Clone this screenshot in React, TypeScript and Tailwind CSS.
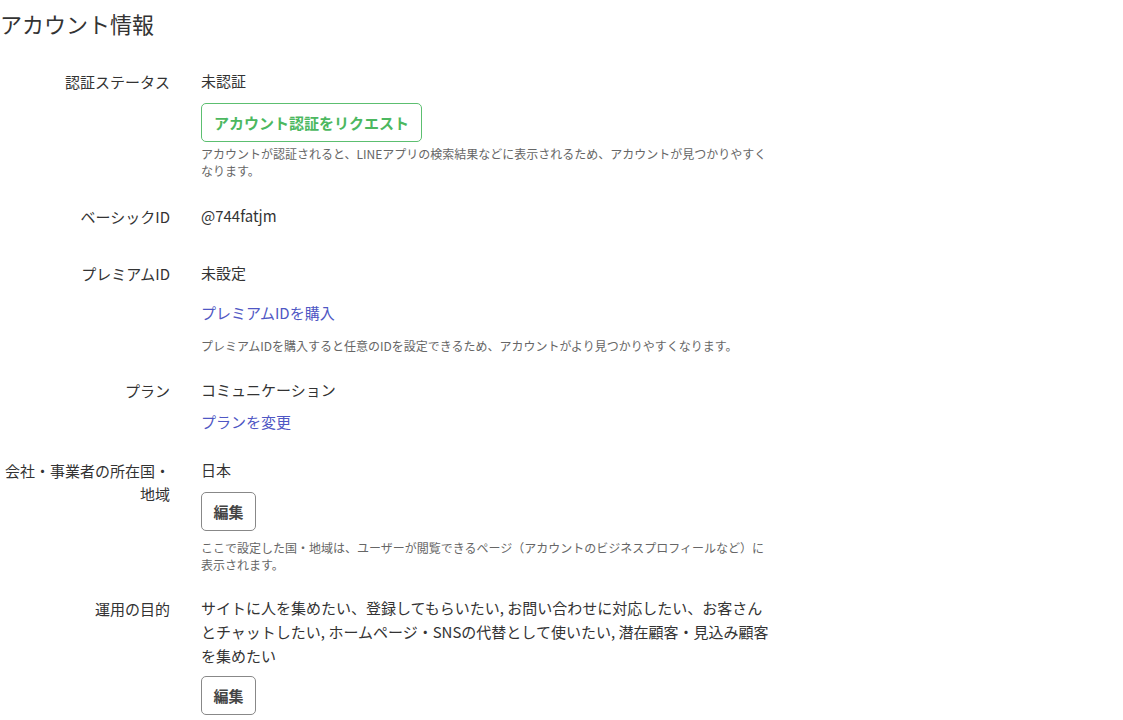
const font = {
  fontFamily: '"Noto Sans CJK JP", "Noto Sans", sans-serif',
};

function Row({
  label,
  className,
  children,
}: {
  label: React.ReactNode;
  className?: string;
  children: React.ReactNode;
}) {
  return (
    <div className={`grid grid-cols-[170px_570px] gap-x-[31px] ${className ?? ""}`}>
      <div className="text-right text-[15px] leading-[23px] text-[#333] pt-px">
        {label}
      </div>
      <div className="text-[15px] leading-[24px] text-[#333]">{children}</div>
    </div>
  );
}

function Help({ children, className }: { children: React.ReactNode; className?: string }) {
  return (
    <p className={`text-[12px] leading-[17px] text-[#666] ${className ?? ""}`}>
      {children}
    </p>
  );
}

function EditButton({ className }: { className?: string }) {
  return (
    <button
      className={`block h-[39px] w-[55px] rounded-[5px] border border-[#888] bg-white text-[15px] font-bold text-[#444] ${className ?? ""}`}
    >
      編集
    </button>
  );
}

export default function App() {
  return (
    <div className="min-h-screen bg-white" style={font}>
      <h1 className="pt-[7px] text-[22px] leading-[32px] font-normal text-[#333]">
        アカウント情報
      </h1>

      <Row label="認証ステータス" className="mt-[30px]">
        <div>未認証</div>
        <button className="mt-[10px] block h-[39px] rounded-[5px] border border-[#5cbf70] bg-white px-[12px] text-[15px] font-bold text-[#4cb860]">
          アカウント認証をリクエスト
        </button>
        <Help className="mt-[3px]">
          アカウントが認証されると、LINEアプリの検索結果などに表示されるため、アカウントが見つかりやすくなります。
        </Help>
      </Row>

      <Row label="ベーシックID" className="mt-[25px]">
        <div>@744fatjm</div>
      </Row>

      <Row label="プレミアムID" className="mt-[33px]">
        <div>未設定</div>
        <a className="mt-[16px] block text-[#4f57c4]" href="#">
          プレミアムIDを購入
        </a>
        <Help className="mt-[12px]">
          プレミアムIDを購入すると任意のIDを設定できるため、アカウントがより見つかりやすくなります。
        </Help>
      </Row>

      <Row label="プラン" className="mt-[24px]">
        <div>コミュニケーション</div>
        <a className="mt-[8px] block text-[#4f57c4]" href="#">
          プランを変更
        </a>
      </Row>

      <Row
        label={
          <>
            会社・事業者の所在国・
            <br />
            地域
          </>
        }
        className="mt-[24px]"
      >
        <div>日本</div>
        <EditButton className="mt-[10px]" />
        <Help className="mt-[8px]">
          ここで設定した国・地域は、ユーザーが閲覧できるページ（アカウントのビジネスプロフィールなど）に表示されます。
        </Help>
      </Row>

      <Row label="運用の目的" className="mt-[23px] pb-[10px]">
        <div>
          サイトに人を集めたい、登録してもらいたい, お問い合わせに対応したい、お客さんとチャットしたい, ホームページ・SNSの代替として使いたい, 潜在顧客・見込み顧客を集めたい
        </div>
        <EditButton className="mt-[8px]" />
      </Row>
    </div>
  );
}
